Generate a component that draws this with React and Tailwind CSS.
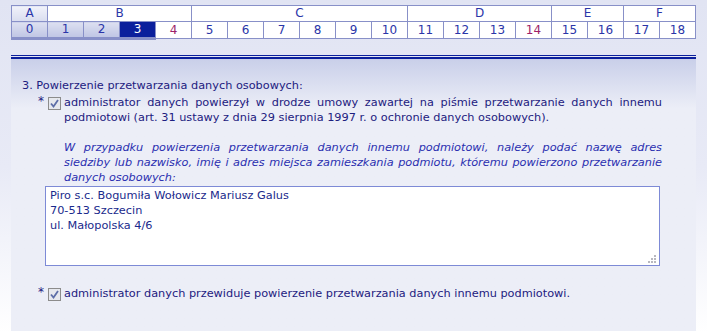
import React from "react";

const groups = [
  { label: "A", span: 1 },
  { label: "B", span: 4 },
  { label: "C", span: 6 },
  { label: "D", span: 4 },
  { label: "E", span: 2 },
  { label: "F", span: 2 },
];

const steps = Array.from({ length: 19 }, (_, i) => i);

const noteLines = [
  "W przypadku powierzenia przetwarzania danych innemu podmiotowi, należy podać nazwę adres",
  "siedziby lub nazwisko, imię i adres miejsca zamieszkania podmiotu, któremu powierzono przetwarzanie",
];

function Check() {
  return (
    <span className="inline-flex h-[13px] w-[13px] shrink-0 items-center justify-center border border-[#8c8c8c] bg-[#e6e8ee]">
      <svg width="9" height="9" viewBox="0 0 9 9">
        <path d="M1 4.5 L3.5 7.5 L8 1" fill="none" stroke="#5d6ea8" strokeWidth="1.8" />
      </svg>
    </span>
  );
}

function StepCell({ n }) {
  let cls = "bg-white text-[#2a35a8]";
  if (n < 3) cls = "bg-gradient-to-b from-[#dde0f1] to-[#bfc5e4] text-[#2a35a8] border-b-[3px] border-b-[#8890c8]";
  if (n === 3) cls = "bg-[#0b1f9c] text-white border-b-[3px] border-b-[#8890c8]";
  if (n === 4 || n === 14) cls = "bg-white text-[#9c1f6a]";
  return (
    <td className={`h-[16px] border border-[#8890c8] p-0 text-center leading-[15px] ${cls}`}>{n}</td>
  );
}

export default function App() {
  return (
    <div
      className="min-h-[331px] w-[707px] bg-gradient-to-b from-[#e1e4f3] via-[#e8eaf6] to-[#ffffff] pl-[11px] pt-[5px] text-[11.3px] text-[#1d2080]"
      style={{ fontFamily: '"DejaVu Sans", Verdana, sans-serif' }}
    >
      <table className="w-[685px] table-fixed border-collapse text-[12px]">
        <tbody>
          <tr>
            {groups.map((g) => (
              <td
                key={g.label}
                colSpan={g.span}
                className={`h-[16px] border border-[#8890c8] p-0 text-center leading-[15px] text-[#2a35a8] ${
                  g.label === "A" ? "bg-gradient-to-b from-[#f1f2fa] to-[#d9ddef]" : "bg-white"
                }`}
              >
                {g.label}
              </td>
            ))}
          </tr>
          <tr>
            {steps.map((n) => (
              <StepCell key={n} n={n} />
            ))}
          </tr>
        </tbody>
      </table>

      <div className="mt-[15px] w-[685px] border-t border-[#0b1f9c] pt-px">
        <div className="border-t-2 border-[#0b1f9c]" />
      </div>

      <div className="h-[274px] w-[685px] bg-gradient-to-b from-[#c9cfe9] via-[#eceef7] via-[18%] to-[#eceef7] pl-[11px] pr-[34px] pt-[19px] leading-[15px]">
        <div>3. Powierzenie przetwarzania danych osobowych:</div>

        <div className="mt-[2px] flex items-start">
          <span className="w-[26px] shrink-0 pl-[16px] text-[12px] leading-[12px]">*</span>
          <span className="mr-[3px] mt-[2px]"><Check /></span>
          <div className="flex-1">
            <p className="text-justify">
              administrator danych powierzył w drodze umowy zawartej na piśmie przetwarzanie danych innemu
              podmiotowi (art. 31 ustawy z dnia 29 sierpnia 1997 r. o ochronie danych osobowych).
            </p>
            <div className="mt-[15px] italic text-[#2a2fb0]">
              {noteLines.map((line) => (
                <div key={line} className="text-justify [text-align-last:justify]">{line}</div>
              ))}
              <div>danych osobowych:</div>
            </div>
          </div>
        </div>

        <div className="relative ml-[23px] mt-[1px] h-[80px] w-[615px] border border-[#7d8ad6] bg-white px-[4px] pt-[1px] text-[#1a2a8c]">
          <div>Piro s.c. Bogumiła Wołowicz Mariusz Galus</div>
          <div>70-513 Szczecin</div>
          <div>ul. Małopolska 4/6</div>
          <svg className="absolute bottom-[2px] right-[3px]" width="10" height="10" viewBox="0 0 10 10">
            <g fill="#b8b8c0">
              <rect x="8" y="2" width="2" height="2" />
              <rect x="5" y="5" width="2" height="2" />
              <rect x="8" y="5" width="2" height="2" />
              <rect x="2" y="8" width="2" height="2" />
              <rect x="5" y="8" width="2" height="2" />
              <rect x="8" y="8" width="2" height="2" />
            </g>
          </svg>
        </div>

        <div className="mt-[20px] flex items-start">
          <span className="w-[26px] shrink-0 pl-[16px] text-[12px] leading-[12px]">*</span>
          <span className="mr-[3px] mt-[2px]"><Check /></span>
          <span>administrator danych przewiduje powierzenie przetwarzania danych innemu podmiotowi.</span>
        </div>
      </div>
    </div>
  );
}
